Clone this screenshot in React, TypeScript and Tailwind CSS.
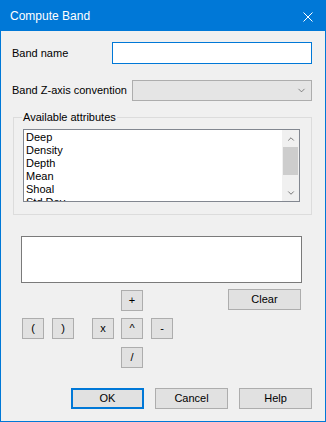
import { ChevronDown, ChevronUp } from 'lucide-react';

const font = { fontFamily: '"Liberation Sans", Arial, sans-serif' };

function Btn({ label, className = '' }: { label: string; className?: string }) {
    return (
        <div
            className={`h-[21px] bg-[#e1e1e1] border border-[#adadad] flex items-center justify-center text-[11px] text-black leading-none ${className}`}
        >
            {label}
        </div>
    );
}

export default function App() {
    const attrs = ['Deep', 'Density', 'Depth', 'Mean', 'Shoal', 'Std Dev'];

    return (
        <div className="w-[326px] h-[422px] border border-[#0078d7] bg-[#f0f0f0] flex flex-col text-black" style={font}>
            {/* Title bar */}
            <div className="h-[30px] bg-[#0078d7] flex items-center justify-between pl-[9px] pr-[12px] shrink-0">
                <span className="text-white text-[12px]">Compute Band</span>
                <svg width="10" height="10" viewBox="0 0 10 10" className="mt-[1px]">
                    <path d="M0.5 0.5 L9.5 9.5 M9.5 0.5 L0.5 9.5" stroke="white" strokeWidth="1" />
                </svg>
            </div>

            <div className="flex flex-col pl-[11px] pr-[13px]">
                {/* Band name */}
                <div className="flex items-center mt-[11px] h-[22px]">
                    <span className="text-[11px] w-[100px]">Band name</span>
                    <div className="flex-1 h-[22px] bg-white border border-[#0078d7]" />
                </div>

                {/* Z-axis */}
                <div className="flex items-center mt-[16px] h-[21px]">
                    <span className="text-[11px] w-[120px]">Band Z-axis convention</span>
                    <div className="flex-1 h-[21px] bg-[#e5e5e5] border border-[#adadad] flex items-center justify-end pr-[4px]">
                        <ChevronDown size={11} strokeWidth={1.5} className="text-[#555]" />
                    </div>
                </div>

                {/* Group box */}
                <div className="relative mt-[16px] h-[98px] border border-[#dcdcdc] ml-[1px]">
                    <span className="absolute -top-[8px] left-[8px] px-[1px] bg-[#f0f0f0] text-[11px] leading-[14px]">
                        Available attributes
                    </span>
                    <div className="mt-[11px] ml-[9px] mr-[11px] h-[73px] bg-white border border-[#828790] flex overflow-hidden">
                        <div className="flex-1 pl-[2px] pt-[1px] overflow-hidden">
                            {attrs.map((a) => (
                                <div key={a} className="h-[13px] text-[11px] leading-[13px]">
                                    {a}
                                </div>
                            ))}
                        </div>
                        <div className="w-[17px] bg-[#f0f0f0] flex flex-col items-center">
                            <div className="h-[17px] flex items-center justify-center">
                                <ChevronUp size={10} strokeWidth={2} className="text-[#606060]" />
                            </div>
                            <div className="w-[15px] h-[28px] bg-[#cdcdcd]" />
                            <div className="flex-1" />
                            <div className="h-[17px] flex items-center justify-center">
                                <ChevronDown size={10} strokeWidth={2} className="text-[#606060]" />
                            </div>
                        </div>
                    </div>
                </div>

                {/* Expression */}
                <div className="mt-[21px] ml-[9px] mr-[10px] h-[47px] bg-white border border-[#7a7a7a]" />

                {/* Operator buttons */}
                <div className="flex mt-[7px] ml-[109px] items-start">
                    <Btn label="+" className="w-[22px]" />
                    <div className="flex-1" />
                    <Btn label="Clear" className="w-[73px] -mt-[1px] mr-[11px]" />
                </div>
                <div className="flex mt-[7px] ml-[10px]">
                    <Btn label="(" className="w-[22px]" />
                    <Btn label=")" className="w-[22px] ml-[8px]" />
                    <Btn label="x" className="w-[22px] ml-[18px]" />
                    <Btn label="^" className="w-[22px] ml-[7px]" />
                    <Btn label="-" className="w-[22px] ml-[8px]" />
                </div>
                <div className="flex mt-[8px] ml-[109px]">
                    <Btn label="/" className="w-[22px]" />
                </div>

                {/* Bottom buttons */}
                <div className="flex mt-[20px] ml-[59px] gap-[11px]">
                    <div className="w-[73px] h-[21px] bg-[#e1e1e1] border-2 border-[#0078d7] flex items-center justify-center text-[11px]">
                        OK
                    </div>
                    <Btn label="Cancel" className="w-[73px]" />
                    <Btn label="Help" className="w-[73px]" />
                </div>
            </div>
        </div>
    );
}
